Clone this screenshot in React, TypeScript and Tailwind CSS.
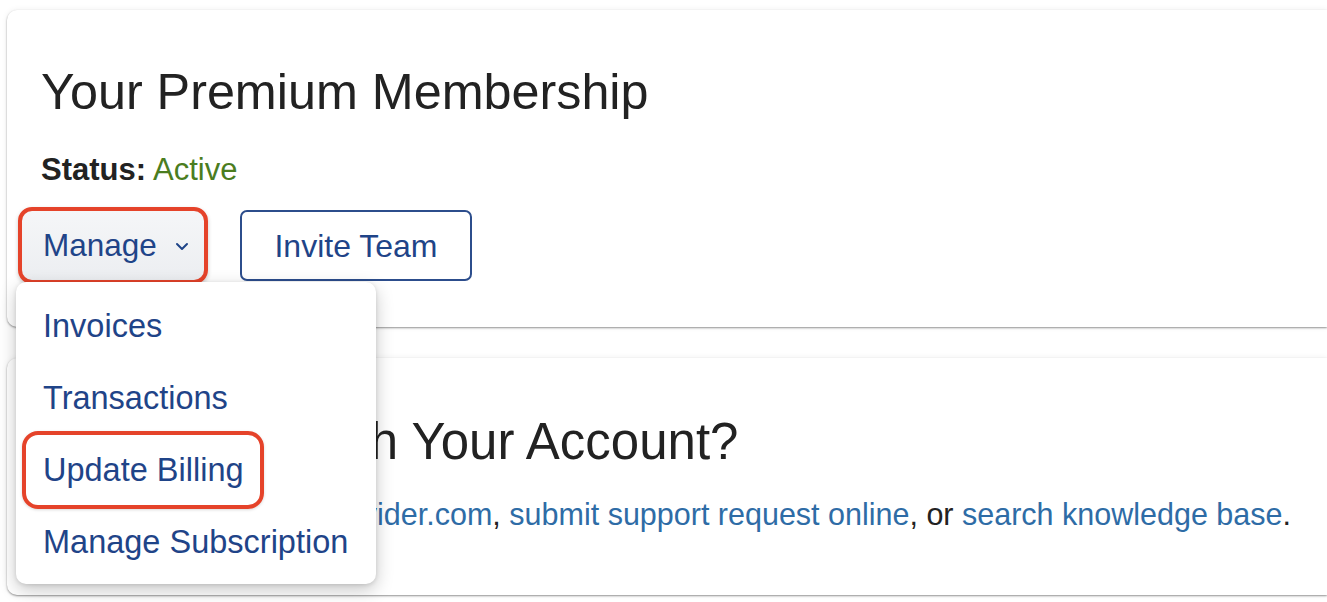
import React from "react";

const font = { fontFamily: '"Liberation Sans", Arial, sans-serif' };

function Chevron() {
  return (
    <svg width="14" height="9" viewBox="0 0 14 9" fill="none" className="ml-[18px] mt-[2px]">
      <path d="M2 2l5 5 5-5" stroke="#1f4488" strokeWidth="2" strokeLinecap="round" strokeLinejoin="round" />
    </svg>
  );
}

function DropdownMenu() {
  return (
    <div className="absolute left-[16px] top-[282px] z-10 w-[360px] rounded-[10px] bg-white pt-[8px] pb-[6px] shadow-[0_6px_18px_rgba(0,0,0,0.22),0_1px_4px_rgba(0,0,0,0.12)]">
      <div className="flex h-[72px] items-center pl-[27px] text-[32.5px] text-[#1f4488]">Invoices</div>
      <div className="flex h-[72px] items-center pl-[27px] text-[32.5px] text-[#1f4488]">Transactions</div>
      <div className="flex h-[72px] items-center pl-[6px]">
        <div className="flex h-[78px] w-[242px] shrink-0 items-center rounded-[16px] border-[4px] border-[#e5432a] pl-[17px] text-[32.5px] text-[#1f4488] shadow-[0_1px_3px_rgba(0,0,0,0.15)]">
          Update Billing
        </div>
      </div>
      <div className="flex h-[72px] items-center pl-[27px] text-[32.5px] text-[#1f4488]">Manage Subscription</div>
    </div>
  );
}

export default function App() {
  return (
    <div className="relative h-[602px] w-[1327px] overflow-hidden bg-white pl-[7px] pt-[10px]" style={font}>
      {/* membership card */}
      <div className="h-[317px] rounded-l-[10px] bg-white pl-[34px] pt-[52px] shadow-[0_1px_2px_rgba(0,0,0,0.4),0_0_6px_rgba(0,0,0,0.07)]">
        <h1 className="text-[50.3px] leading-[60px] text-[#222222]">Your Premium Membership</h1>
        <p className="mt-[30px] text-[31px] leading-[36px] text-[#222222]">
          <span className="font-bold">Status:</span> <span className="text-[#4b7d1f]">Active</span>
        </p>
        <div className="mt-[19px] flex items-center">
          <button className="-ml-[23px] flex h-[77px] w-[190px] items-center rounded-[14px] border-[4px] border-[#e5432a] bg-gradient-to-b from-[#f5f6f8] to-[#eceef1] pl-[21px] text-[31.5px] text-[#1f4488] shadow-[0_2px_4px_rgba(0,0,0,0.2)]">
            Manage
            <Chevron />
          </button>
          <button className="ml-[32px] h-[71px] w-[232px] rounded-[7px] border-2 border-[#2c4d8c] text-[32px] text-[#1f4488]">
            Invite Team
          </button>
        </div>
      </div>

      {/* help card */}
      <div className="mt-[31px] h-[237px] rounded-l-[10px] bg-white pl-[34px] pt-[54px] shadow-[0_1px_2px_rgba(0,0,0,0.4),0_0_6px_rgba(0,0,0,0.07)]">
        <h2 className="text-[51px] leading-[60px] text-[#222222]">Need Help With Your Account?</h2>
        <p className="mt-[24px] text-[30.5px] leading-[36px] text-[#222222]">
          E-mail us: <span className="text-[#2e6ca6]">support@provider.com</span>,{" "}
          <span className="text-[#2e6ca6]">submit support request online</span>, or{" "}
          <span className="text-[#2e6ca6]">search knowledge base</span>.
        </p>
      </div>

      <DropdownMenu />
    </div>
  );
}
